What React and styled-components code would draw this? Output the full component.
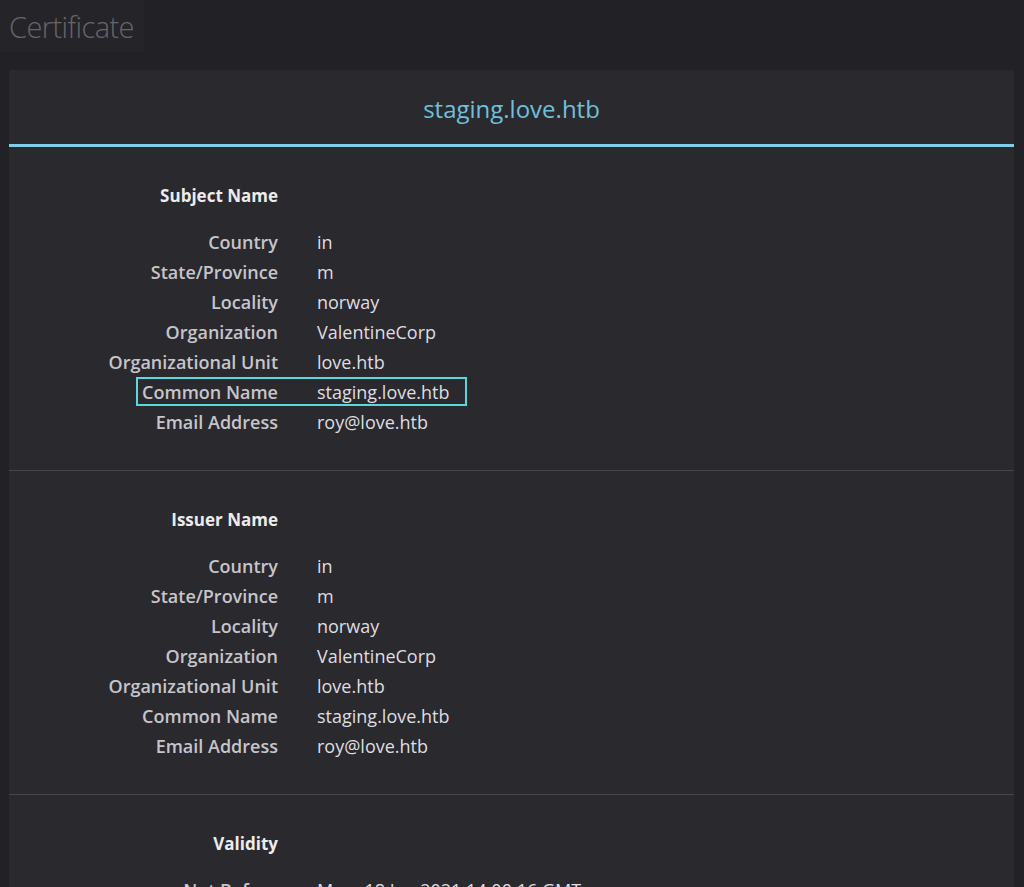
import React from "react";
import styled, { createGlobalStyle } from "styled-components";

const sections = [
  {
    title: "Subject Name",
    rows: [
      ["Country", "in"],
      ["State/Province", "m"],
      ["Locality", "norway"],
      ["Organization", "ValentineCorp"],
      ["Organizational Unit", "love.htb"],
      ["Common Name", "staging.love.htb", true],
      ["Email Address", "roy@love.htb"],
    ],
  },
  {
    title: "Issuer Name",
    rows: [
      ["Country", "in"],
      ["State/Province", "m"],
      ["Locality", "norway"],
      ["Organization", "ValentineCorp"],
      ["Organizational Unit", "love.htb"],
      ["Common Name", "staging.love.htb"],
      ["Email Address", "roy@love.htb"],
    ],
  },
  {
    title: "Validity",
    rows: [
      ["Not Before", "Mon, 18 Jan 2021 14:00:16 GMT"],
      ["Not After", "Tue, 18 Jan 2022 14:00:16 GMT"],
    ],
  },
];

const App = () => {
  return (
    <>
      <GlobalStyle />
      <Page>
        <Heading>Certificate</Heading>
        <Card>
          <CardHeader>
            <HostName>staging.love.htb</HostName>
          </CardHeader>
          {sections.map((section) => (
            <Section key={section.title}>
              <SectionTitle>{section.title}</SectionTitle>
              <Rows>
                {section.rows.map(([label, value, marked]) => (
                  <Row key={label} marked={marked ? 1 : 0}>
                    <Label>{label}</Label>
                    <Value>{value}</Value>
                  </Row>
                ))}
              </Rows>
            </Section>
          ))}
        </Card>
      </Page>
    </>
  );
};

export default App;

const GlobalStyle = createGlobalStyle`
  html, body {
    margin: 0;
    background: #222126;
    overflow: hidden;
  }
  body {
    font-family: "Open Sans", "DejaVu Sans", sans-serif;
  }
`;

const Page = styled.div`
  padding: 0 10px 0 9px;
  height: 887px;
  overflow: hidden;
`;

const Heading = styled.h1`
  display: inline-block;
  margin: 0 0 0 -9px;
  padding: 10px 10px 8px 9px;
  background: #252429;
  color: #66656a;
  font-size: 29px;
  font-weight: 300;
  line-height: 34px;
  letter-spacing: -0.6px;
`;

const Card = styled.div`
  margin-top: 18px;
  background: #2a292e;
  border-radius: 2px;
`;

const CardHeader = styled.div`
  height: 74px;
  display: flex;
  align-items: center;
  justify-content: center;
  border-bottom: 3px solid #7fcfe9;
`;

const HostName = styled.div`
  color: #6ec0dc;
  font-size: 24px;
  padding-top: 2px;
`;

const Section = styled.section`
  padding: 35px 0 33px;
  & + & {
    border-top: 1px solid #47464b;
  }
`;

const SectionTitle = styled.h2`
  margin: 0 0 17px;
  width: 269px;
  text-align: right;
  color: #ececef;
  font-size: 17px;
  font-weight: 700;
  line-height: 28px;
`;

const Rows = styled.div`
  display: flex;
  flex-direction: column;
`;

const Row = styled.div`
  position: relative;
  display: grid;
  grid-template-columns: 269px 1fr;
  column-gap: 39px;
  height: 30px;
  align-items: center;

  &::after {
    content: "";
    display: ${(p) => (p.marked ? "block" : "none")};
    position: absolute;
    left: 127px;
    top: 0;
    width: 331px;
    height: 29px;
    box-sizing: border-box;
    border: 2px solid #5fd6dd;
  }
`;

const Label = styled.div`
  text-align: right;
  color: #c6c5cb;
  font-size: 18px;
  font-weight: 600;
  white-space: nowrap;
`;

const Value = styled.div`
  color: #dedde2;
  font-size: 18px;
  white-space: nowrap;
`;
